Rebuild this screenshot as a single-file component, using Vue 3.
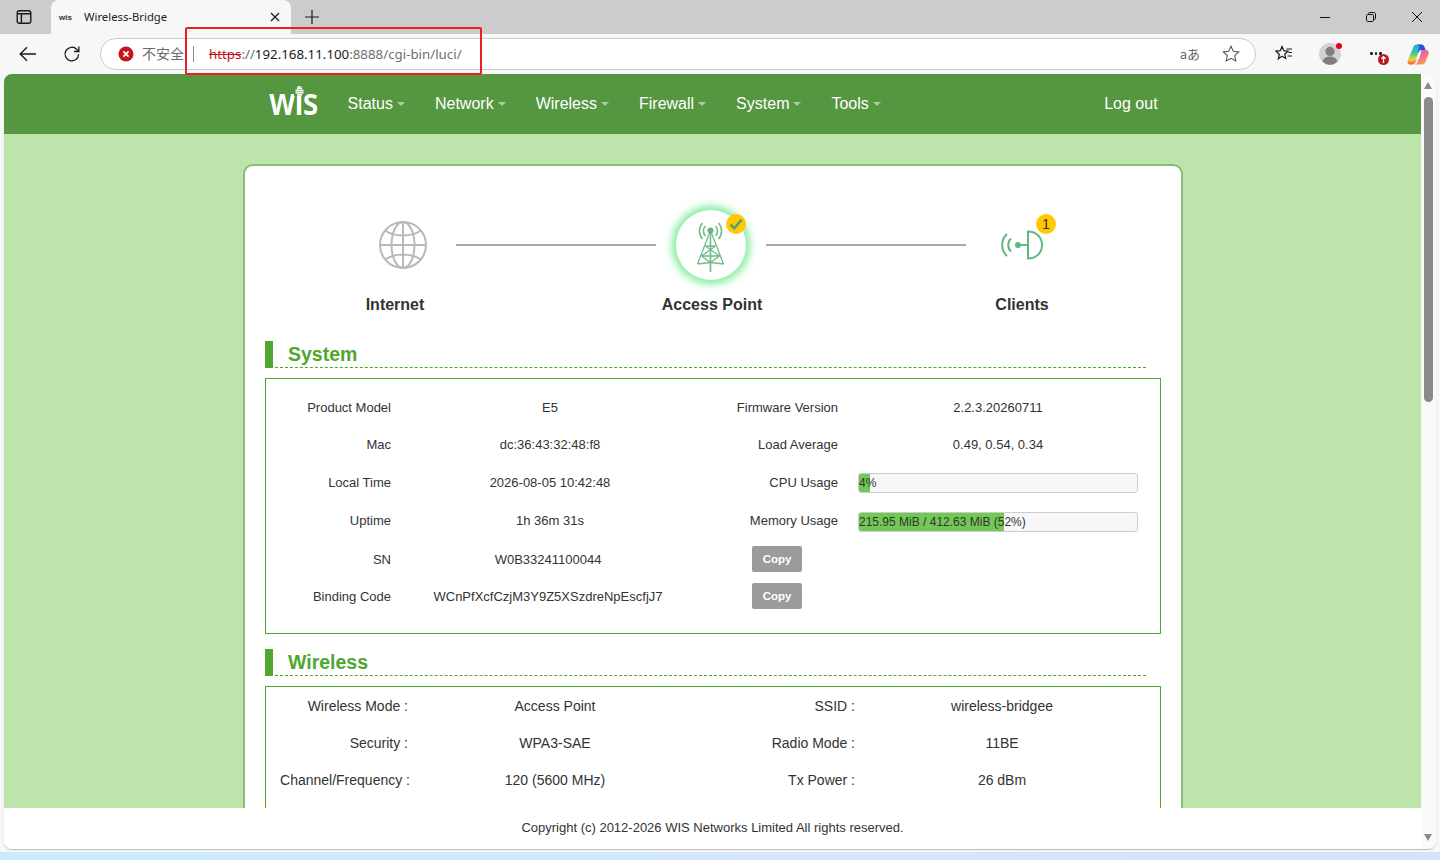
<template>
  <div class="window">
    <div class="tabstrip">
      <button class="strip-btn">
        <svg width="16" height="16" viewBox="0 0 16 16" fill="none" stroke="#1a1a1a" stroke-width="1.4"><rect x="1.2" y="1.7" width="13.6" height="12.6" rx="2.2"/><path d="M1.5 4.8h13M5.4 4.8v9.2"/></svg>
      </button>
      <div class="tab">
        <span class="tab-icon">wis</span>
        <span class="tab-title">Wireless-Bridge</span>
        <svg class="tab-close" width="10" height="10" viewBox="0 0 10 10" stroke="#1a1a1a" stroke-width="1.2"><path d="M1 1l8 8M9 1l-8 8"/></svg>
      </div>
      <svg class="tab-new" width="14" height="14" viewBox="0 0 14 14" stroke="#1a1a1a" stroke-width="1.2"><path d="M7 0v14M0 7h14"/></svg>
      <div class="win-controls">
        <svg width="10" height="10" viewBox="0 0 10 10" stroke="#111" stroke-width="1"><path d="M0 5.5h10"/></svg>
        <svg width="10" height="10" viewBox="0 0 10 10" fill="none" stroke="#111" stroke-width="1"><rect x=".5" y="2.5" width="7" height="7" rx="1.2"/><path d="M2.5 2.5V1.6c0-.6.5-1.1 1.1-1.1h4.3c.9 0 1.6.7 1.6 1.6v4.3c0 .6-.5 1.1-1.1 1.1h-.9"/></svg>
        <svg width="10" height="10" viewBox="0 0 10 10" stroke="#111" stroke-width="1"><path d="M0 0l10 10M10 0L0 10"/></svg>
      </div>
    </div>

    <div class="toolbar">
      <svg class="tool-back" width="18" height="16" viewBox="0 0 18 16" fill="none" stroke="#1a1a1a" stroke-width="1.4"><path d="M17 8H1.5M8 1.2L1.2 8 8 14.8"/></svg>
      <svg class="tool-reload" width="18" height="18" viewBox="0 0 18 18" fill="none" stroke="#1a1a1a" stroke-width="1.3"><path d="M15.6 9.2a6.8 6.8 0 1 1-2-5L15.8 6.4"/><path d="M15.9 1.6v4.9h-4.9"/></svg>
      <div class="omnibox">
        <svg width="16" height="16" viewBox="0 0 16 16"><circle cx="8" cy="8" r="7.5" fill="#c4161c"/><path d="M5.4 5.4l5.2 5.2M10.6 5.4l-5.2 5.2" stroke="#fff" stroke-width="1.7"/></svg>
        <span class="insecure">不安全</span>
        <span class="omni-sep"></span>
        <span class="url"><span class="url-scheme">https</span><span class="url-dim">://</span><span class="url-host">192.168.11.100</span><span class="url-dim">:8888/cgi-bin/luci/</span></span>
        <span class="translate">aあ</span>
        <svg class="omni-star" width="18" height="18" viewBox="0 0 18 18" fill="none" stroke="#555" stroke-width="1.1"><path d="M9 1.3l2.3 5 5.4.6-4 3.7 1.1 5.4L9 13.3 4.2 16l1.1-5.4-4-3.7 5.4-.6z"/></svg>
      </div>
      <svg class="tool-fav" width="18" height="18" viewBox="0 0 18 18" fill="none" stroke="#1a1a1a" stroke-width="1.2"><path d="M7 1.5l1.8 4.2 4.2.4-3.2 2.9.9 4.4L7 11.2l-3.700 2.700 1-4.400L1 6.100l4.300-.4z"/><path d="M11.500 4h5.500M13.500 7.500H17M12.500 11H17"/></svg>
      <div class="avatar">
        <svg width="22" height="22" viewBox="0 0 22 22"><circle cx="11" cy="11" r="11" fill="#d3d3d3"/><circle cx="11" cy="8.400" r="4.600" fill="#7f7f7f"/><path d="M3.600 18.500c.8-3.600 3.600-5 7.400-5s6.600 1.400 7.400 5A11 11 0 0 1 11 22a11 11 0 0 1-7.400-3.500z" fill="#7f7f7f"/></svg>
        <span class="avatar-dot"></span>
      </div>
      <div class="more">
        <span class="more-dots"><i></i><i></i><i></i></span>
        <svg class="more-badge" width="11" height="11" viewBox="0 0 11 11"><circle cx="5.500" cy="5.500" r="5.500" fill="#b71c1c"/><path d="M5.500 9V3M3.400 4.800l2.100-2.100 2.100 2.100" stroke="#fff" stroke-width="1.300" fill="none"/></svg>
      </div>
      <svg class="copilot" width="22" height="21" viewBox="0 0 22 21">
        <defs>
          <linearGradient id="cpA" x1="0" y1="0" x2="0" y2="1"><stop offset="0" stop-color="#2aa4ee"/><stop offset=".45" stop-color="#3fc98c"/><stop offset=".75" stop-color="#f2d23a"/><stop offset="1" stop-color="#ef5a3c"/></linearGradient>
          <linearGradient id="cpB" x1="0" y1="0" x2=".6" y2="1"><stop offset="0" stop-color="#b66be8"/><stop offset=".5" stop-color="#f0669e"/><stop offset="1" stop-color="#f9a04a"/></linearGradient>
          <linearGradient id="cpC" x1="0" y1="0" x2="1" y2="0"><stop offset="0" stop-color="#1d6fe0"/><stop offset="1" stop-color="#2f45c8"/></linearGradient>
        </defs>
        <path d="M6.500 2.800C7 1.300 8.300.5 10 .5h4.500L9.200 17.300c-.6 2-2 3.200-4 3.200H3C1 20.500 0 18.500.7 16.500z" fill="url(#cpA)"/>
        <path d="M9 .5h5.500c1.500 0 2.500 1 3 2.500l1 3h-4c-1 0-2 .5-2.400 1.500L11 9 12 3C12 1.500 10.500.5 9 .5z" fill="url(#cpC)"/>
        <path d="M14.500 6H19c2 0 3.300 2 2.600 4l-3 7.800c-.6 1.600-1.800 2.700-3.500 2.700H7c1.500 0 3.300-1 3.800-3z" fill="url(#cpB)"/>
        <path d="M11 8.500h3.200L12.200 15H9z" fill="#fff" opacity=".7"/>
      </svg>
    </div>

    <div class="viewport">
      <div class="page">
        <header class="topbar">
          <div class="logo">
            <span class="logo-text">wis</span>
            <svg class="logo-dome" width="11" height="9" viewBox="0 0 11 9" fill="#fff"><path d="M3 .3h5v1.800H3zM1.500 2.500h8v1.800h-8zM1.500 4.700h8v1.800h-8zM3 6.900h5v1.800H3z"/></svg>
          </div>
          <nav class="nav">
            <a v-for="item in navItems" :key="item" class="nav-item">{{ item }}<span class="caret"></span></a>
          </nav>
          <a class="logout">Log out</a>
        </header>

        <main class="content">
          <div class="card">
            <div class="stage">
              <div class="node node-internet">
                <div class="node-icon">
                  <svg width="70" height="70" viewBox="0 0 70 70" fill="none" stroke="#b9b9b9" stroke-width="2">
                    <circle cx="37" cy="35" r="23"/>
                    <ellipse cx="37" cy="35" rx="11.500" ry="23"/>
                    <path d="M37 12v46M14 35h46M19 20.500c5 3.400 11 5 18 5s13-1.600 18-5M19 49.500c5-3.400 11-5 18-5s13 1.600 18 5"/>
                  </svg>
                </div>
                <div class="node-label">Internet</div>
              </div>
              <div class="link"></div>
              <div class="node">
                <div class="node-icon node-glow">
                  <svg width="70" height="70" viewBox="0 0 70 70" fill="none" stroke="#6fbd8a" stroke-width="1.300">
                    <circle cx="34.500" cy="20.500" r="3" fill="#62b67f" stroke="none"/>
                    <path d="M34.500 23v39" stroke-width="1.600"/>
                    <path d="M33.500 23L21.500 54M35.500 23l12 31M29.500 36h10M25.500 46h18M29.500 36l14 10M39.500 36l-14 10M25.500 46l9 6.500M43.500 46l-9 6.500M21.500 54l13-1.500M47.500 54l-13-1.500"/>
                    <path d="M29.500 16a7 7 0 0 0 0 10M39.500 16a7 7 0 0 1 0 10M26.500 13a12 12 0 0 0 0 16M42.500 13a12 12 0 0 1 0 16" stroke-width="1.600"/>
                  </svg>
                  <span class="badge">
                    <svg width="14" height="12" viewBox="0 0 14 12" fill="none" stroke="#4d9c74" stroke-width="2.400"><path d="M1.500 6.500l3.800 3.800L12.500 1.800"/></svg>
                  </span>
                </div>
                <div class="node-label node-label-shift">Access Point</div>
              </div>
              <div class="link"></div>
              <div class="node">
                <div class="node-icon">
                  <svg width="70" height="70" viewBox="0 0 70 70" fill="none" stroke="#62b67f" stroke-width="2">
                    <circle cx="32" cy="35" r="3" fill="#62b67f" stroke="none"/>
                    <path d="M32 35h10M42 21.500v27c8.500 0 14-6 14-13.500s-5.500-13.500-14-13.500z"/>
                    <path d="M25 28.500a9 9 0 0 0 0 13M21 24a15 15 0 0 0 0 22"/>
                  </svg>
                  <span class="badge">1</span>
                </div>
                <div class="node-label node-label-shift">Clients</div>
              </div>
            </div>

            <div class="sec-head">
              <span class="sec-bar"></span>
              <h2 class="sec-title">System</h2>
            </div>
            <div class="box sys-grid">
              <template v-for="row in systemRows" :key="row.label">
                <div class="cell-label">{{ row.label }}</div>
                <div class="cell-value">{{ row.value }}</div>
                <div class="cell-label">{{ row.label2 }}</div>
                <div v-if="row.bar" class="bar">
                  <span class="bar-fill" :style="{ width: row.bar + '%' }"></span>
                  <span class="bar-text">{{ row.value2 }}</span>
                </div>
                <div v-else class="cell-value cell-wide">{{ row.value2 }}</div>
              </template>
              <template v-for="row in copyRows" :key="row.label">
                <div class="cell-label">{{ row.label }}</div>
                <div class="cell-value cell-copyable">{{ row.value }}</div>
                <div class="cell-btn"><button class="copy">Copy</button></div>
                <div></div>
              </template>
            </div>

            <div class="sec-head sec-next">
              <span class="sec-bar"></span>
              <h2 class="sec-title">Wireless</h2>
            </div>
            <div class="box wifi-grid">
              <template v-for="row in wirelessRows" :key="row[0]">
                <div class="cell-label">{{ row[0] }}</div>
                <div class="cell-value">{{ row[1] }}</div>
                <div class="cell-label">{{ row[2] }}</div>
                <div class="cell-value">{{ row[3] }}</div>
              </template>
            </div>
          </div>
        </main>

        <footer class="copyright">Copyright (c) 2012-2026 WIS Networks Limited All rights reserved.</footer>
      </div>
      <div class="scrollbar">
        <span class="arrow arrow-up"></span>
        <span class="thumb"></span>
        <span class="arrow arrow-down"></span>
      </div>
    </div>
    <div class="desktop"></div>
    <div class="annotation"></div>
  </div>
</template>

<script setup>
const navItems = ['Status', 'Network', 'Wireless', 'Firewall', 'System', 'Tools']

const systemRows = [
  { label: 'Product Model', value: 'E5', label2: 'Firmware Version', value2: '2.2.3.20260711' },
  { label: 'Mac', value: 'dc:36:43:32:48:f8', label2: 'Load Average', value2: '0.49, 0.54, 0.34' },
  { label: 'Local Time', value: '2026-08-05 10:42:48', label2: 'CPU Usage', value2: '4%', bar: 4 },
  { label: 'Uptime', value: '1h 36m 31s', label2: 'Memory Usage', value2: '215.95 MiB / 412.63 MiB (52%)', bar: 52 },
]

const copyRows = [
  { label: 'SN', value: 'W0B33241100044' },
  { label: 'Binding Code', value: 'WCnPfXcfCzjM3Y9Z5XSzdreNpEscfjJ7' },
]

const wirelessRows = [
  ['Wireless Mode :', 'Access Point', 'SSID :', 'wireless-bridgee'],
  ['Security :', 'WPA3-SAE', 'Radio Mode :', '11BE'],
  ['Channel/Frequency :', '120 (5600 MHz)', 'Tx Power :', '26 dBm'],
]
</script>

<style>
html,
body {
  margin: 0;
  overflow: hidden;
}
</style>

<style scoped>
.window {
  position: relative;
  width: 1440px;
  height: 860px;
  display: flex;
  flex-direction: column;
  overflow: hidden;
  background: #f7f7f7;
  font-family: "Liberation Sans", Arial, sans-serif;
  color: #333;
}

.tabstrip {
  height: 34px;
  flex: none;
  display: flex;
  align-items: center;
  background: #cccccc;
}

.strip-btn {
  width: 51px;
  height: 34px;
  padding: 0 0 0 16px;
  border: 0;
  background: none;
  display: flex;
  align-items: center;
}

.tab {
  width: 240px;
  height: 34px;
  box-sizing: border-box;
  padding: 0 11px 0 8px;
  display: flex;
  align-items: center;
  background: #f7f7f7;
  border-radius: 8px 8px 0 0;
}

.tab-icon {
  width: 25px;
  font: 700 8px "Liberation Sans", sans-serif;
  color: #333;
}

.tab-title {
  flex: 1;
  margin-bottom: 2px;
  font: 11.3px "Noto Sans", sans-serif;
  color: #222;
}

.tab-new {
  margin-left: 14px;
}

.win-controls {
  margin-left: auto;
  width: 102px;
  display: flex;
  justify-content: space-between;
  padding-right: 18px;
}

.toolbar {
  height: 40px;
  flex: none;
  display: flex;
  align-items: center;
  background: #f7f7f7;
}

.tool-back {
  margin-left: 19px;
}

.tool-reload {
  margin-left: 26px;
}

.omnibox {
  width: 1156px;
  height: 32px;
  margin-left: 19px;
  box-sizing: border-box;
  padding: 0 15px 0 17px;
  display: flex;
  align-items: center;
  background: #fff;
  border: 1px solid #ccc;
  border-radius: 16px;
}

.insecure {
  margin: 0 0 2px 8px;
  font: 14px "Noto Sans CJK SC", sans-serif;
  color: #6b6b6b;
}

.omni-sep {
  width: 1px;
  height: 16px;
  margin-left: 9px;
  background: #8a8a8a;
}

.url {
  margin-left: 15px;
  flex: 1;
  font: 13.3px "Noto Sans", sans-serif;
  color: #777;
}

.url-scheme {
  color: #c4161c;
  text-decoration: line-through;
}

.url-dim {
  color: #6f6f6f;
}

.url-host {
  color: #1a1a1a;
}

.translate {
  margin-bottom: 2px;
  font: 13px "Noto Sans CJK SC", sans-serif;
  color: #666;
}

.omni-star {
  margin-left: 22px;
}

.tool-fav {
  margin-left: 19px;
}

.avatar {
  position: relative;
  width: 22px;
  height: 22px;
  margin-left: 26px;
}

.avatar-dot {
  position: absolute;
  top: 0;
  right: -1px;
  width: 6px;
  height: 6px;
  border-radius: 50%;
  background: #e60012;
}

.more {
  position: relative;
  width: 26px;
  height: 20px;
  margin-left: 27px;
}

.more-dots {
  position: absolute;
  left: 2px;
  top: 8px;
  display: flex;
  gap: 2px;
}

.more-dots i {
  width: 2.500px;
  height: 2.500px;
  border-radius: 50%;
  background: #1a1a1a;
}

.more-badge {
  position: absolute;
  left: 10px;
  top: 10px;
}

.copilot {
  margin-left: 13px;
}

.viewport {
  height: 775px;
  flex: none;
  margin: 0 4px;
  display: flex;
  overflow: hidden;
  background: #fff;
  border-radius: 8px;
  box-shadow: 0 1px 1px #bbb;
}

.page {
  flex: 1;
  min-width: 0;
  display: flex;
  flex-direction: column;
}

.topbar {
  height: 60px;
  flex: none;
  display: flex;
  align-items: center;
  padding-left: 264px;
  background: #559640;
}

.logo {
  position: relative;
  width: 50px;
  height: 44px;
  margin-right: 29.6px;
}

.logo-text {
  position: absolute;
  left: 1px;
  top: -7px;
  font: 600 37px "Noto Sans", sans-serif;
  letter-spacing: -1px;
  color: #fff;
  transform: scaleX(0.86);
  transform-origin: left;
}

.logo-dome {
  position: absolute;
  left: 26px;
  top: 5px;
  background: #559640;
}

.nav {
  display: flex;
  gap: 30px;
}

.nav-item,
.logout {
  font-size: 16px;
  color: #fff;
}

.caret {
  display: inline-block;
  margin-left: 4px;
  vertical-align: 3px;
  border-top: 4px solid #a9cf9c;
  border-left: 4px solid transparent;
  border-right: 4px solid transparent;
}

.logout {
  margin-left: 223.400px;
}

.content {
  flex: 1;
  min-height: 0;
  overflow: hidden;
  padding: 30px 0 0 239px;
  background: #bde4ab;
}

.card {
  width: 940px;
  height: 1100px;
  box-sizing: border-box;
  padding: 0 20px;
  background: #fff;
  border: 2px solid #8abb78;
  border-radius: 10px;
}

.stage {
  display: flex;
  padding: 44px 0 0 81px;
  margin-bottom: 27px;
}

.node {
  width: 110px;
  flex: none;
  display: flex;
  flex-direction: column;
  align-items: center;
}

.node-icon {
  position: relative;
  width: 70px;
  height: 70px;
}

.node-glow {
  border-radius: 50%;
  background: #fff;
  box-shadow: 0 0 9px 4px #7feb9b;
}

.badge {
  position: absolute;
  left: 50px;
  top: 4px;
  width: 20px;
  height: 20px;
  display: flex;
  align-items: center;
  justify-content: center;
  border-radius: 50%;
  background: #ffc800;
  font-size: 14px;
  color: #333;
}

.node-label {
  margin-top: 16px;
  font-size: 16px;
  line-height: 18px;
  font-weight: 700;
  white-space: nowrap;
}

.node-label-shift {
  padding-left: 2px;
}

.node-internet .node-label {
  padding-right: 12px;
}

.link {
  width: 200px;
  height: 2px;
  flex: none;
  margin-top: 34px;
  background: #aaa;
}

.sec-head {
  height: 27px;
  display: flex;
  margin-right: 15px;
}

.sec-next {
  margin-top: 15px;
}

.sec-bar {
  width: 8px;
  flex: none;
  background: #4ea72e;
}

.sec-title {
  flex: 1;
  margin: 0 0 0 2px;
  padding-left: 13px;
  height: 27px;
  box-sizing: border-box;
  border-bottom: 1px dashed #4ea72e;
  font-size: 19.5px;
  line-height: 26px;
  font-weight: 700;
  color: #4ea72e;
}

.box {
  margin-top: 10px;
  border: 1px solid #4ea72e;
}

.cell-label {
  text-align: right;
  align-self: center;
}

.cell-value {
  text-align: center;
  align-self: center;
}

.sys-grid {
  display: grid;
  grid-template-columns: 125px 318px 129px 322px;
  grid-template-rows: 37px 37px 38px 39px 38px 36px;
  height: 256px;
  box-sizing: border-box;
  padding-top: 10px;
  font-size: 13px;
}

.cell-wide {
  margin-left: 20px;
  width: 280px;
}

.cell-copyable {
  padding-right: 4px;
}

.bar {
  position: relative;
  width: 280px;
  height: 20px;
  margin: 2px 0 0 20px;
  box-sizing: border-box;
  align-self: center;
  overflow: hidden;
  border: 1px solid #ccc;
  border-radius: 3px;
  background: #f7f7f7;
  font-size: 12px;
}

.bar-fill {
  position: absolute;
  left: 0;
  top: 0;
  bottom: 0;
  background: #72c855;
}

.bar-text {
  position: relative;
  display: block;
  line-height: 18px;
  white-space: nowrap;
}

.cell-btn {
  align-self: center;
  padding-left: 43px;
}

.copy {
  width: 50px;
  height: 26px;
  display: block;
  padding: 0;
  border: 0;
  border-radius: 2px;
  background: #9b9b9b;
  color: #fff;
  font: 700 11.500px "Liberation Sans", sans-serif;
}

.wifi-grid {
  display: grid;
  grid-template-columns: 142px 294px 153px 294px;
  grid-auto-rows: 37px;
  height: 200px;
  align-content: start;
  font-size: 14px;
}

.wifi-grid > :nth-child(9) {
  margin-right: -2px;
}

.copyright {
  height: 41px;
  flex: none;
  box-sizing: border-box;
  padding-top: 12px;
  text-align: center;
  background: #fff;
  font-size: 13px;
}

.scrollbar {
  position: relative;
  width: 15px;
  flex: none;
  background: #fafafa;
}

.thumb {
  position: absolute;
  left: 3px;
  top: 23px;
  width: 9px;
  height: 305px;
  border-radius: 5px;
  background: #8b8b8b;
}

.arrow {
  position: absolute;
  left: 3px;
  border-left: 4.500px solid transparent;
  border-right: 4.500px solid transparent;
}

.arrow-up {
  top: 8px;
  border-bottom: 7px solid #8b8b8b;
}

.arrow-down {
  bottom: 8px;
  border-top: 7px solid #8b8b8b;
}

.desktop {
  flex: 1;
  margin-top: 3px;
  background: linear-gradient(90deg, #c9ecf8, #d6e6f8 60%, #d3e4f8);
}

.annotation {
  position: absolute;
  left: 185px;
  top: 27px;
  width: 297px;
  height: 48px;
  box-sizing: border-box;
  border: 2px solid #ee1c25;
  border-radius: 2px;
}
</style>
